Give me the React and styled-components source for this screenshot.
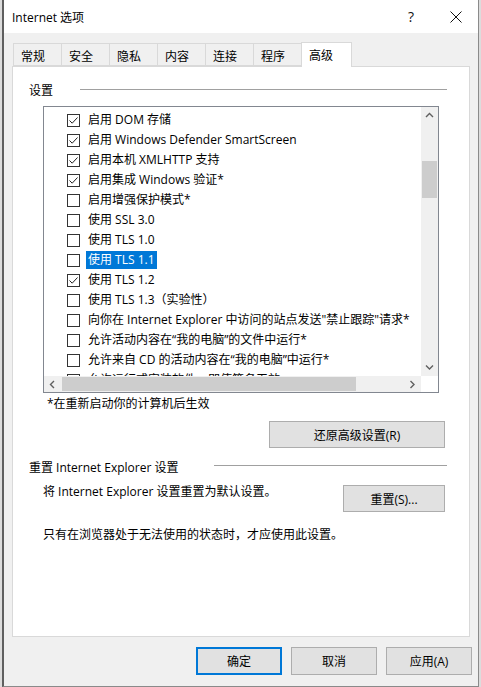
import React from "react";
import styled, { createGlobalStyle } from "styled-components";

const Global = createGlobalStyle`
  html, body { margin: 0; padding: 0; }
  body {
    background: #dcdcdc;
    font-family: "Segoe UI", "Open Sans", "Noto Sans CJK SC", sans-serif;
    font-size: 12px;
    color: #000;
  }
  * { box-sizing: border-box; }
`;

const Window = styled.div`
  margin-left: 2px;
  width: 477px;
  height: 687px;
  background: #f0f0f0;
  border-left: 2px solid #5f5f5f;
  border-right: 1px solid #8a8a8a;
  border-bottom: 1px solid #8a8a8a;
  display: flex;
  flex-direction: column;
`;

const TitleBar = styled.div`
  height: 33px;
  background: #fff;
  display: flex;
  align-items: center;
  padding-left: 8px;
`;

const Title = styled.div`
  flex: 1;
  font-size: 12px;
`;

const TitleButton = styled.div`
  width: ${(p) => p.$w}px;
  height: 33px;
  display: flex;
  align-items: center;
  justify-content: center;
  font-size: 14px;
  color: #111;
`;

const Body = styled.div`
  flex: 1;
  display: flex;
  flex-direction: column;
  padding: 9px 0 0 8px;
`;

const TabStrip = styled.div`
  display: flex;
  align-items: flex-end;
  height: 24px;
  padding-left: 2px;
  position: relative;
  z-index: 1;
`;

const Tab = styled.div`
  width: ${(p) => (p.$active ? 51 : 49)}px;
  height: ${(p) => (p.$active ? 25 : 23)}px;
  margin-bottom: ${(p) => (p.$active ? -1 : 0)}px;
  background: ${(p) => (p.$active ? "#fff" : "#f0f0f0")};
  border: 1px solid #d9d9d9;
  border-bottom: ${(p) => (p.$active ? "none" : "1px solid #d9d9d9")};
  margin-left: -1px;
  padding-left: 7px;
  padding-top: ${(p) => (p.$active ? 3 : 2)}px;
  font-size: 12px;
  display: flex;
  align-items: ${(p) => (p.$active ? "flex-start" : "center")};
`;

const Panel = styled.div`
  width: 458px;
  height: 571px;
  background: #fff;
  border: 1px solid #d9d9d9;
  display: flex;
  flex-direction: column;
  padding: 14px 0 0 16px;
`;

const GroupHeader = styled.div`
  display: flex;
  align-items: center;
  gap: ${(p) => p.$gap}px;
  width: 418px;
  height: 17px;
  margin-top: ${(p) => p.$top || 0}px;
`;

const GroupLine = styled.div`
  flex: 1;
  height: 1px;
  background: #a0a0a0;
  margin-top: ${(p) => p.$offset || 0}px;
`;

const ListBox = styled.div`
  margin: 8px 0 0 14px;
  width: 396px;
  height: 287px;
  border: 1px solid #828790;
  display: grid;
  grid-template-columns: 1fr 17px;
  grid-template-rows: 1fr 16px;
  overflow: hidden;
`;

const ListContent = styled.div`
  overflow: hidden;
  padding-top: 3px;
  padding-left: 23px;
`;

const Row = styled.div`
  height: 20px;
  display: flex;
  align-items: center;
  white-space: nowrap;
`;

const Box = styled.div`
  width: 13px;
  height: 13px;
  border: 1px solid #333;
  background: #fff;
  flex: none;
  display: flex;
  align-items: center;
  justify-content: center;
`;

const Label = styled.span`
  margin-left: 6px;
  padding: 1px 2px;
  line-height: 16px;
  background: ${(p) => (p.$selected ? "#0078d7" : "transparent")};
  color: ${(p) => (p.$selected ? "#fff" : "#000")};
`;

const VScroll = styled.div`
  background: #f0f0f0;
  display: flex;
  flex-direction: column;
  align-items: center;
`;

const HScroll = styled.div`
  background: #f0f0f0;
  display: flex;
  align-items: center;
`;

const Corner = styled.div`
  background: #fff;
`;

const Arrow = styled.div`
  width: 17px;
  height: ${(p) => p.$h || 17}px;
  flex: none;
  display: flex;
  align-items: center;
  justify-content: center;
`;

const VThumb = styled.div`
  width: 15px;
  height: 37px;
  background: #cdcdcd;
  margin-top: 37px;
`;

const Fill = styled.div`
  flex: 1;
`;

const HThumb = styled.div`
  width: 294px;
  height: 14px;
  background: #cdcdcd;
  margin-left: 1px;
`;

const Note = styled.div`
  margin: 3px 0 0 18px;
  height: 16px;
  line-height: 16px;
`;

const ButtonRow = styled.div`
  display: flex;
  justify-content: ${(p) => p.$justify || "flex-end"};
  align-items: flex-start;
  width: ${(p) => p.$w || 416}px;
  margin-top: ${(p) => p.$top || 0}px;
  margin-left: ${(p) => p.$left || 0}px;
`;

const Button = styled.button`
  width: ${(p) => p.$w}px;
  height: ${(p) => p.$h || 27}px;
  margin-top: ${(p) => p.$top || 0}px;
  background: #e1e1e1;
  border: ${(p) => (p.$default ? "2px solid #0078d7" : "1px solid #adadad")};
  font-family: inherit;
  font-size: 12px;
  color: #000;
  padding: 0;
  display: flex;
  align-items: center;
  justify-content: center;
`;

const Text = styled.div`
  margin-left: ${(p) => p.$left || 0}px;
  margin-top: ${(p) => p.$top || 0}px;
  line-height: 16px;
`;

const Footer = styled.div`
  display: flex;
  justify-content: flex-end;
  gap: 9px;
  padding: 10px 6px 0 0;
`;

const Check = () => (
  <svg width="11" height="11" viewBox="0 0 11 11">
    <path d="M1.5 5.5 L4.2 8.2 L9.5 2.5" fill="none" stroke="#222" strokeWidth="1" />
  </svg>
);

const Chevron = ({ dir }) => {
  const d = {
    up: "M1 5 L4.5 1.5 L8 5",
    down: "M1 1.5 L4.5 5 L8 1.5",
    left: "M5 1 L1.5 4.5 L5 8",
    right: "M1.5 1 L5 4.5 L1.5 8",
  }[dir];
  const vert = dir === "up" || dir === "down";
  return (
    <svg width={vert ? 9 : 7} height={vert ? 7 : 9} viewBox={vert ? "0 0 9 7" : "0 0 7 9"}>
      <path d={d} fill="none" stroke="#606060" strokeWidth="1.4" />
    </svg>
  );
};

const rows = [
  { t: "启用 DOM 存储", c: true },
  { t: "启用 Windows Defender SmartScreen", c: true },
  { t: "启用本机 XMLHTTP 支持", c: true },
  { t: "启用集成 Windows 验证*", c: true },
  { t: "启用增强保护模式*", c: false },
  { t: "使用 SSL 3.0", c: false },
  { t: "使用 TLS 1.0", c: false },
  { t: "使用 TLS 1.1", c: false, s: true },
  { t: "使用 TLS 1.2", c: true },
  { t: "使用 TLS 1.3（实验性）", c: false },
  { t: "向你在 Internet Explorer 中访问的站点发送\"禁止跟踪\"请求*", c: false },
  { t: "允许活动内容在“我的电脑”的文件中运行*", c: false },
  { t: "允许来自 CD 的活动内容在“我的电脑”中运行*", c: false },
  { t: "允许运行或安装软件，即使签名无效", c: false },
];

const tabs = ["常规", "安全", "隐私", "内容", "连接", "程序", "高级"];

export default function App() {
  return (
    <>
      <Global />
      <Window>
        <TitleBar>
          <Title>Internet 选项</Title>
          <TitleButton $w={46}>?</TitleButton>
          <TitleButton $w={44}>
            <svg width="12" height="12" viewBox="0 0 12 12">
              <path d="M0.5 0.5 L11.5 11.5 M11.5 0.5 L0.5 11.5" stroke="#111" strokeWidth="1" />
            </svg>
          </TitleButton>
        </TitleBar>
        <Body>
          <TabStrip>
            {tabs.map((t) => (
              <Tab key={t} $active={t === "高级"}>
                {t}
              </Tab>
            ))}
          </TabStrip>
          <Panel>
            <GroupHeader $gap={27}>
              <span>设置</span>
              <GroupLine />
            </GroupHeader>
            <ListBox>
              <ListContent>
                {rows.map((r) => (
                  <Row key={r.t}>
                    <Box>{r.c && <Check />}</Box>
                    <Label $selected={r.s}>{r.t}</Label>
                  </Row>
                ))}
              </ListContent>
              <VScroll>
                <Arrow>
                  <Chevron dir="up" />
                </Arrow>
                <VThumb />
                <Fill />
                <Arrow>
                  <Chevron dir="down" />
                </Arrow>
              </VScroll>
              <HScroll>
                <Arrow $h={16}>
                  <Chevron dir="left" />
                </Arrow>
                <HThumb />
                <Fill />
                <Arrow $h={16}>
                  <Chevron dir="right" />
                </Arrow>
              </HScroll>
              <Corner />
            </ListBox>
            <Note>*在重新启动你的计算机后生效</Note>
            <ButtonRow $top={9}>
              <Button $w={176}>还原高级设置(R)</Button>
            </ButtonRow>
            <GroupHeader $gap={36} $top={10}>
              <span>重置 Internet Explorer 设置</span>
              <GroupLine $offset={-3} />
            </GroupHeader>
            <ButtonRow $justify="space-between" $top={9} $left={14} $w={402}>
              <Text>将 Internet Explorer 设置重置为默认设置。</Text>
              <Button $w={102} $h={27} $top={1}>重置(S)...</Button>
            </ButtonRow>
            <Text $left={14} $top={15}>只有在浏览器处于无法使用的状态时，才应使用此设置。</Text>
          </Panel>
          <Footer>
            <Button $w={86} $h={28} $default>确定</Button>
            <Button $w={86} $h={28}>取消</Button>
            <Button $w={86} $h={28}>应用(A)</Button>
          </Footer>
        </Body>
      </Window>
    </>
  );
}
